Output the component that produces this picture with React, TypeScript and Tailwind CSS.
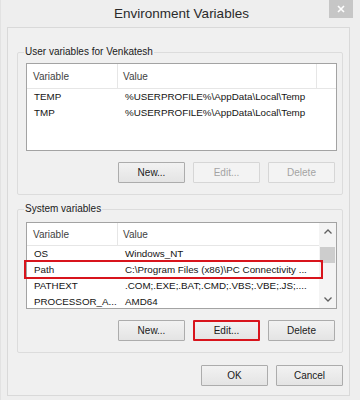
import React from "react";

const font = { fontFamily: '"Liberation Sans", Arial, sans-serif' };

function Btn({ label, disabled, red }: { label: string; disabled?: boolean; red?: boolean }) {
  const base = "w-[67px] h-[21px] flex items-center justify-center text-[10px] rounded-[1px]";
  if (red)
    return (
      <div className={`${base} border-2 border-[#d8141c] bg-gradient-to-b from-[#f2f2f2] to-[#e4e4e4] text-[#1a1a1a]`}>
        {label}
      </div>
    );
  if (disabled)
    return (
      <div className={`${base} border border-[#d6d6d6] bg-[#f3f3f3] text-[#a3a3a3]`}>{label}</div>
    );
  return (
    <div className={`${base} border border-[#acacac] bg-gradient-to-b from-[#f2f2f2] to-[#e4e4e4] text-[#1a1a1a]`}>
      {label}
    </div>
  );
}

function Row({ name, value }: { name: string; value: string }) {
  return (
    <div className="flex h-[16px] leading-[16px] text-[9.8px] text-[#141414] whitespace-nowrap">
      <div className="w-[92px] pl-[7px] overflow-hidden">{name}</div>
      <div className="flex-1 pl-[6px] overflow-hidden">{value}</div>
    </div>
  );
}

export default function App() {
  return (
    <div style={font} className="w-[360px] h-[400px] bg-[#eeeeee] flex flex-col border-l border-[#e2e2e2] overflow-hidden">
      {/* Title bar */}
      <div className="relative h-[27px] shrink-0 flex items-center justify-center pt-[2px]">
        <span className="text-[13.5px] text-[#2a2a2a] pl-[2px]">Environment Variables</span>
        <div className="absolute right-[7px] top-0 w-[24px] h-[18px] bg-[#c6c6c6] flex items-center justify-center">
          <svg width="8" height="8" viewBox="0 0 8 8">
            <path d="M1 1 L7 7 M7 1 L1 7" stroke="#ffffff" strokeWidth="1.6" />
          </svg>
        </div>
      </div>

      {/* Client area */}
      <div className="flex-1 ml-[6px] mr-[10px] mb-[4px] border border-[#d9d9d9] bg-[#f0f0f0] pl-[9px] pr-[6px] pt-[16px] flex flex-col">
        {/* User variables */}
        <fieldset className="border border-[#dcdcdc] rounded-[2px]">
          <legend className="ml-[6px] px-[1px] text-[10px] leading-[16px] text-[#1a1a1a]">User variables for Venkatesh</legend>
          <div className="pl-[8px] pr-[5px] pt-[3px] pb-[11px]">
            <div className="h-[88px] border border-[#a3a3a3] bg-white flex flex-col">
              <div className="flex h-[25px] shrink-0 border-b border-[#e6e6e6] text-[10px] text-[#3f3f3f] items-center">
                <div className="w-[91px] h-full pl-[6px] flex items-center border-r border-[#e6e6e6]">Variable</div>
                <div className="w-[199px] h-full pl-[5px] flex items-center border-r border-[#e6e6e6]">Value</div>
                <div className="flex-1" />
              </div>
              <Row name="TEMP" value="%USERPROFILE%\AppData\Local\Temp" />
              <Row name="TMP" value="%USERPROFILE%\AppData\Local\Temp" />
            </div>
            <div className="mt-[11px] flex justify-end gap-[8px] pr-[2px]">
              <Btn label="New..." />
              <Btn label="Edit..." disabled />
              <Btn label="Delete" disabled />
            </div>
          </div>
        </fieldset>

        {/* System variables */}
        <fieldset className="border border-[#dcdcdc] rounded-[2px] mt-[6px]">
          <legend className="ml-[6px] px-[1px] text-[10px] leading-[16px] text-[#1a1a1a]">System variables</legend>
          <div className="pl-[8px] pr-[5px] pt-[5px] pb-[11px]">
            <div className="relative">
              <div className="h-[87px] border border-[#a3a3a3] bg-white flex overflow-hidden">
                <div className="flex-1 flex flex-col min-w-0">
                  <div className="flex h-[23px] shrink-0 border-b border-[#e6e6e6] text-[10px] text-[#3f3f3f] items-center">
                    <div className="w-[91px] h-full pl-[6px] flex items-center border-r border-[#e6e6e6]">Variable</div>
                    <div className="flex-1 h-full pl-[5px] flex items-center">Value</div>
                  </div>
                  <Row name="OS" value="Windows_NT" />
                  <Row name="Path" value="C:\Program Files (x86)\PC Connectivity ..." />
                  <Row name="PATHEXT" value=".COM;.EXE;.BAT;.CMD;.VBS;.VBE;.JS;...." />
                  <Row name="PROCESSOR_A..." value="AMD64" />
                </div>
                {/* Scrollbar */}
                <div className="w-[17px] shrink-0 bg-[#f4f4f4] flex flex-col items-center">
                  <div className="h-[17px] w-full flex items-center justify-center">
                    <svg width="8" height="5" viewBox="0 0 8 5">
                      <path d="M0.5 4.5 L4 1 L7.5 4.5" stroke="#606060" strokeWidth="1.3" fill="none" />
                    </svg>
                  </div>
                  <div className="mt-[7px] w-[15px] h-[16px] bg-[#cdcdcd]" />
                  <div className="flex-1" />
                  <div className="h-[17px] w-full flex items-center justify-center">
                    <svg width="8" height="5" viewBox="0 0 8 5">
                      <path d="M0.5 0.5 L4 4 L7.5 0.5" stroke="#606060" strokeWidth="1.3" fill="none" />
                    </svg>
                  </div>
                </div>
              </div>
              {/* Highlight box around Path */}
              <div className="absolute left-[-2px] top-[38px] w-[299px] h-[19px] border-2 border-[#d8141c]" />
            </div>
            <div className="mt-[11px] flex justify-end gap-[8px] pr-[2px]">
              <Btn label="New..." />
              <Btn label="Edit..." red />
              <Btn label="Delete" />
            </div>
          </div>
        </fieldset>

        <div className="mt-[12px] flex justify-end gap-[8px] pr-[0px]">
          <Btn label="OK" />
          <Btn label="Cancel" />
        </div>
      </div>
    </div>
  );
}
